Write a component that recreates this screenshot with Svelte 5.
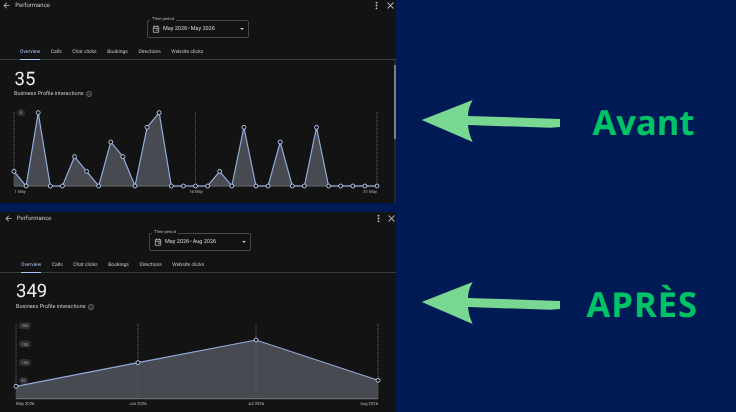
<script>
  const tabs = ['Overview', 'Calls', 'Chat clicks', 'Bookings', 'Directions', 'Website clicks'];

  const may = [1,0,5,0,0,2,1,0,3,2,0,4,5,0,0,0,0,1,0,4,0,0,3,0,0,4,0,0,0,0,0];

  // day charts: 31 points, 0-5 scale
  const before = {
    period: 'May 2026–May 2026',
    total: '35',
    height: 93,
    points: may.map((v, i) => [14 + i * 12.1, 86 - v * 14.67]),
    base: 86,
    grid: [14, 195.5, 377],
    ticks: [{ x: 14, y: 12.7, t: '5', w: 8 }],
    labels: [
      { x: 14.5, t: '1 May', a: 'start' },
      { x: 196, t: '16 May', a: 'middle' },
      { x: 377, t: '31 May', a: 'end' }
    ]
  };

  const after = {
    period: 'May 2026–Aug 2026',
    total: '349',
    height: 93,
    points: [[16, 74.3], [138, 50.7], [256, 28], [378, 68.3]],
    base: 86.7,
    grid: [16, 138, 256, 378],
    ticks: [
      { x: 25, y: 13.7, t: '200', w: 12 },
      { x: 25, y: 32, t: '150', w: 12 },
      { x: 25, y: 50.5, t: '100', w: 12 },
      { x: 23.5, y: 68.6, t: '50', w: 9 }
    ],
    labels: [
      { x: 16, t: 'May 2026', a: 'start' },
      { x: 138, t: 'Jun 2026', a: 'middle' },
      { x: 256, t: 'Jul 2026', a: 'middle' },
      { x: 378, t: 'Aug 2026', a: 'end' }
    ]
  };

  const area = (c) =>
    `M${c.points[0][0]},${c.base} ` + c.points.map((p) => `L${p[0]},${p[1]}`).join(' ') + ` L${c.points[c.points.length - 1][0]},${c.base} Z`;
  const line = (c) => c.points.map((p) => p.join(',')).join(' ');
</script>

{#snippet panel(c, cls)}
  <section class="panel {cls}">
    <header class="top">
      <svg class="ico" viewBox="0 0 24 24" width="9" height="9"><path d="M20 11H7.8l5.6-5.6L12 4l-8 8 8 8 1.4-1.4L7.8 13H20z" fill="#c4c7c5"/></svg>
      <span class="title">Performance</span>
      <span class="spacer"></span>
      <svg class="ico" viewBox="0 0 24 24" width="9" height="9"><circle cx="12" cy="4.5" r="2.4" fill="#c4c7c5"/><circle cx="12" cy="12" r="2.4" fill="#c4c7c5"/><circle cx="12" cy="19.5" r="2.4" fill="#c4c7c5"/></svg>
      <svg class="ico" viewBox="0 0 24 24" width="9" height="9"><path d="M4 4l16 16M20 4L4 20" stroke="#c4c7c5" stroke-width="2.8"/></svg>
    </header>

    <div class="picker-row">
      <div class="picker">
        <span class="legend">Time period</span>
        <svg viewBox="0 0 24 24" width="8" height="8"><path d="M4 5h16v17H4zM8 1v5M16 1v5M4 10h16" fill="none" stroke="#c4c7c5" stroke-width="2.2"/><rect x="13" y="13.5" width="4" height="4" fill="#c4c7c5"/></svg>
        <span class="period">{c.period}</span>
        <span class="caret"></span>
      </div>
    </div>

    <nav class="tabs">
      {#each tabs as t, i}
        <span class="tab" class:on={i === 0}>{t}</span>
      {/each}
    </nav>

    <div class="total">{c.total}</div>
    <div class="caption">
      Business Profile interactions
      <svg viewBox="0 0 24 24" width="6" height="6"><circle cx="12" cy="12" r="10" fill="none" stroke="#c4c7c5" stroke-width="2"/><path d="M12 11v6M12 7v2" stroke="#c4c7c5" stroke-width="2"/></svg>
    </div>

    <svg class="chart" viewBox="0 0 396 {c.height + 8}" width="396" height={c.height + 8}>
      {#each c.grid as x}
        <line x1={x} x2={x} y1="12" y2={c.base} stroke="#55585c" stroke-width="0.7" stroke-dasharray="1 1" />
      {/each}
      <path d={area(c)} fill="#474a51" />
      {#each c.grid as x}
        <line x1={x} x2={x} y1="12" y2={c.base} stroke="#686b71" stroke-width="0.6" stroke-dasharray="1 1" />
      {/each}
      <line x1={c.grid[0]} x2={c.grid[c.grid.length - 1]} y1={c.base} y2={c.base} stroke="#6b6e73" stroke-width="1.2" />
      {#each c.ticks as t}
        <rect x={t.x - t.w / 2 + (t.w === 8 ? 7 : 0)} y={t.y - 3.5} width={t.w} height="7" rx="3.5" fill="#2e2f31" />
        <text class="tick" x={t.x + (t.w === 8 ? 7 : 0)} y={t.y + 1.5} text-anchor="middle">{t.t}</text>
      {/each}
      <polyline points={line(c)} fill="none" stroke="#92acdc" stroke-width="1.2" />
      {#each c.points as p}
        <circle cx={p[0]} cy={p[1]} r="2" fill="#121212" stroke="#aec4ea" stroke-width="1" />
      {/each}
      {#each c.labels as l}
        <text class="axis" x={l.x} y={c.base + 6.5} text-anchor={l.a}>{l.t}</text>
      {/each}
    </svg>
  </section>
{/snippet}

{#snippet note(text, cls)}
  <div class="note {cls}">
    <svg viewBox="0 0 142 46" width="142" height="46">
      <path d="M1.7 22 L52.7 2 Q48 10 48 18 L140 21 V29 L130 29.7 L48 27 Q49 37 52.7 44 Z" fill="#78d892" />
    </svg>
    <span class="word">{text}</span>
  </div>
{/snippet}

<main class="page">
  <div class="shots">
    {@render panel(before, 'first')}
    {@render panel(after, 'second')}
  </div>
  <div class="notes">
    {@render note('Avant', 'a')}
    {@render note('APRÈS', 'b')}
  </div>
</main>

<style>
  :global(body) {
    margin: 0;
    background: #001a56;
  }
  .page {
    width: 736px;
    height: 412px;
    display: flex;
    overflow: hidden;
    background: #001a56;
    font-family: Roboto, "Liberation Sans", sans-serif;
    text-rendering: geometricPrecision;
  }
  .shots {
    width: 396px;
    flex: none;
    display: flex;
    flex-direction: column;
    gap: 9px;
  }
  .panel {
    width: 396px;
    height: 203px;
    background: #131313;
    color: #d5d7d6;
    position: relative;
    overflow: hidden;
    filter: blur(0.3px);
  }
  /* scrollbar only shows on the first shot */
  .panel.first::before {
    content: '';
    position: absolute;
    right: 0;
    top: 60px;
    bottom: 0;
    width: 2.5px;
    background: #26272a;
    z-index: 1;
  }
  .panel.first::after {
    content: '';
    position: absolute;
    right: 0.5px;
    top: 65px;
    width: 1.5px;
    height: 74px;
    background: #7d7e81;
    z-index: 2;
  }
  .panel.second {
    height: 200px;
    padding-top: 1px;
    box-sizing: border-box;
  }
  .top {
    height: 10px;
    display: flex;
    align-items: center;
    padding: 0 1.5px 0 2px;
    gap: 4.3px;
  }
  .second .top {
    padding: 0 0 0 3.5px;
  }
  .title {
    font-size: 6px;
    color: #c9cbca;
  }
  .spacer {
    flex: 1;
  }
  .picker-row {
    display: flex;
    justify-content: center;
    padding-top: 10px;
  }
  .second .picker-row {
    padding-left: 4px;
  }
  .picker {
    position: relative;
    width: 102px;
    height: 18px;
    box-sizing: border-box;
    border: 1px solid #47484a;
    border-radius: 2px;
    display: flex;
    align-items: center;
    padding: 0 4px;
    gap: 3px;
  }
  .legend {
    position: absolute;
    left: 2.3px;
    top: -4px;
    font-size: 4.1px;
    line-height: 6px;
    padding: 0 2px;
    background: #131313;
    color: #b5b7b6;
  }
  .period {
    font-size: 5.5px;
    flex: 1;
    color: #d5d7d6;
  }
  .caret {
    width: 0;
    height: 0;
    border: 2px solid transparent;
    border-top: 2.4px solid #c4c7c5;
    border-bottom: 0;
    margin-right: 0.5px;
  }
  .tabs {
    display: flex;
    gap: 10.5px;
    padding: 10px 0 0 20px;
    height: 11px;
    border-bottom: 1px solid #3a3b3d;
  }
  .second .tabs {
    padding-left: 21px;
  }
  .tab {
    font-size: 5px;
    line-height: 8px;
    color: #c4c7c5;
    position: relative;
    height: 11px;
  }
  .tab.on {
    color: #a8c7fa;
  }
  .tab.on::after {
    content: '';
    position: absolute;
    left: 0;
    right: 0;
    bottom: -1px;
    height: 1.5px;
    background: #a8c7fa;
  }
  .total {
    font-size: 18.5px;
    line-height: 20px;
    margin: 9px 0 0 14.5px;
    color: #eceded;
  }
  .second .total {
    margin: 8px 0 0 16px;
  }
  .caption {
    font-size: 5.5px;
    line-height: 8px;
    margin: 1px 0 2px 14px;
    color: #c4c7c5;
    display: flex;
    align-items: center;
    gap: 2.5px;
  }
  .second .caption {
    margin: 2px 0 1px 16px;
  }
  .chart {
    display: block;
  }
  .tick {
    font-size: 3.8px;
    fill: #a5a7a6;
  }
  .axis {
    font-size: 4.2px;
    fill: #b5b7b6;
  }
  .notes {
    flex: 1;
    display: flex;
    flex-direction: column;
    padding-top: 98px;
    gap: 136.3px;
  }
  .note {
    display: flex;
    align-items: center;
    height: 46px;
    padding-left: 24px;
  }
  .word {
    font-family: "Open Sans", "Liberation Sans", sans-serif;
    font-weight: 700;
    font-size: 34.5px;
    color: #00c266;
    line-height: 46px;
    margin-left: 30.5px;
    padding-top: 3px;
  }
  .note.b .word {
    margin-left: 24.5px;
    letter-spacing: 1px;
  }
</style>
